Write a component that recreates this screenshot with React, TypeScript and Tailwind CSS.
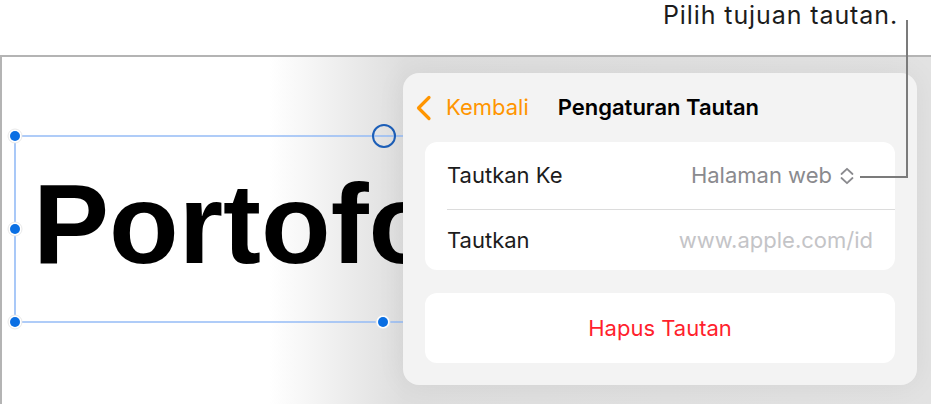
import React from "react";

function BackChevron() {
  return (
    <svg width="17" height="26" viewBox="0 0 17 26" fill="none">
      <path d="M14 2.5 L3.5 13 L14 23.5" stroke="#ff9500" strokeWidth="3.2" strokeLinecap="round" strokeLinejoin="round" />
    </svg>
  );
}

function UpDownChevron() {
  return (
    <svg width="14" height="18" viewBox="0 0 14 18" fill="none">
      <path d="M1.5 7 L7 1.8 L12.5 7" stroke="#8a8a8e" strokeWidth="1.8" strokeLinecap="round" strokeLinejoin="round" />
      <path d="M1.5 11 L7 16.2 L12.5 11" stroke="#8a8a8e" strokeWidth="1.8" strokeLinecap="round" strokeLinejoin="round" />
    </svg>
  );
}

function Selection() {
  // canvas coordinates (origin = inside of the canvas borders)
  const handles = [
    [13, 79],
    [13, 172],
    [13, 265],
    [381, 265],
  ];
  return (
    <svg className="absolute left-0 top-0" width="420" height="300" viewBox="0 0 420 300">
      <line x1="13" y1="79" x2="420" y2="79" stroke="#94bbf6" strokeWidth="1.6" />
      <line x1="13" y1="265" x2="420" y2="265" stroke="#94bbf6" strokeWidth="1.6" />
      <line x1="13" y1="79" x2="13" y2="265" stroke="#94bbf6" strokeWidth="1.6" />
      {handles.map(([x, y]) => (
        <g key={`${x}-${y}`}>
          <circle cx={x} cy={y} r="7" fill="#ffffff" stroke="#e2e2e2" strokeWidth="0.8" />
          <circle cx={x} cy={y} r="5" fill="#0a6fe3" />
        </g>
      ))}
      <circle cx="382" cy="79" r="11" fill="none" stroke="#1d5fb8" strokeWidth="2" />
    </svg>
  );
}

export default function App() {
  return (
    <div
      className="relative flex h-[404px] w-[931px] flex-col overflow-hidden bg-white"
      style={{ fontFamily: "Inter, 'Noto Sans', sans-serif" }}
    >
      <header className="flex h-[55px] shrink-0 items-start justify-end pr-[33px] pt-0">
        <p className="text-[25px] leading-[31px] tracking-[0.9px] text-[#1c1c1c]">Pilih tujuan tautan.</p>
      </header>

      <section className="relative flex-1 border-l-2 border-t-2 border-[#b4b4b4] bg-[linear-gradient(to_right,#ffffff_0px,#ffffff_268px,#dedede_402px,#e2e2e2_100%)]">
        <p
          className="absolute left-[31px] top-[110px] whitespace-nowrap text-[114px] font-bold leading-none text-black"
          style={{ fontFamily: "'Liberation Sans', Arial, sans-serif" }}
        >
          Portofolio
        </p>
        <Selection />

        {/* settings popover sits over the slide */}
        <div className="absolute left-[401px] top-[16px] flex h-[312px] w-[514px] flex-col rounded-2xl bg-[#f3f3f3] px-[22px] shadow-[0_0_30px_rgba(0,0,0,0.06)]">
          <div className="-ml-[10px] flex h-[69px] shrink-0 items-center">
            <BackChevron />
            <span className="ml-[14px] text-[22px] text-[#ff9500]">Kembali</span>
            <span className="ml-[29px] text-[22px] font-semibold text-black">Pengaturan Tautan</span>
          </div>

          <div className="flex flex-col rounded-xl bg-white">
            <div className="flex h-[67px] items-center justify-between pl-[22px] pr-[41px]">
              <span className="text-[22px] text-[#1c1c1c]">Tautkan Ke</span>
              <span className="flex items-center gap-[8px] text-[22px] text-[#8a8a8e]">
                Halaman web
                <UpDownChevron />
              </span>
            </div>
            <div className="ml-[22px] h-px bg-[#dcdcdc]" />
            <div className="flex h-[60px] items-center justify-between pl-[22px] pr-[22px]">
              <span className="text-[22px] text-[#1c1c1c]">Tautkan</span>
              <span className="text-[22px] text-[#c4c4c7]">www.apple.com/id</span>
            </div>
          </div>

          <button
            type="button"
            className="mt-[23px] flex h-[70px] items-center justify-center rounded-xl bg-white text-[22px] text-[#ff1f2d]"
          >
            Hapus Tautan
          </button>
        </div>
      </section>

      <svg className="pointer-events-none absolute left-0 top-0" width="931" height="404" viewBox="0 0 931 404">
        <polyline points="907,20 907,177 860,177" fill="none" stroke="#7b7b7b" strokeWidth="2" />
      </svg>
    </div>
  );
}
